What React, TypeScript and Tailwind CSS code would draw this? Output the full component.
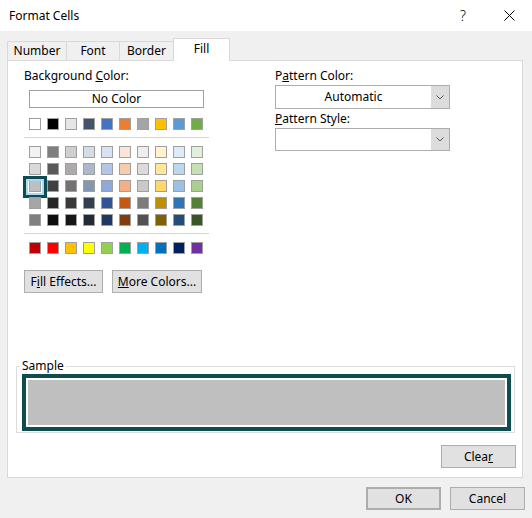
const themeTop = [
  "bg-[#ffffff]", "bg-[#000000]", "bg-[#e7e6e6]", "bg-[#44546a]", "bg-[#4472c4]",
  "bg-[#ed7d31]", "bg-[#a5a5a5]", "bg-[#ffc000]", "bg-[#5b9bd5]", "bg-[#70ad47]",
];

const shades = [
  ["bg-[#f2f2f2]", "bg-[#7f7f7f]", "bg-[#d0cece]", "bg-[#d6dce4]", "bg-[#d9e1f2]", "bg-[#fce4d6]", "bg-[#ededed]", "bg-[#fff2cc]", "bg-[#ddebf7]", "bg-[#e2efda]"],
  ["bg-[#d9d9d9]", "bg-[#595959]", "bg-[#aeaaaa]", "bg-[#acb9ca]", "bg-[#b4c6e7]", "bg-[#f8cbad]", "bg-[#dbdbdb]", "bg-[#ffe699]", "bg-[#bdd7ee]", "bg-[#c6e0b4]"],
  ["bg-[#bfbfbf]", "bg-[#404040]", "bg-[#757171]", "bg-[#8497b0]", "bg-[#8ea9db]", "bg-[#f4b084]", "bg-[#c9c9c9]", "bg-[#ffd966]", "bg-[#9bc2e6]", "bg-[#a9d08e]"],
  ["bg-[#a6a6a6]", "bg-[#262626]", "bg-[#3a3838]", "bg-[#333f4f]", "bg-[#305496]", "bg-[#c65911]", "bg-[#7b7b7b]", "bg-[#bf8f00]", "bg-[#2f75b5]", "bg-[#548235]"],
  ["bg-[#808080]", "bg-[#0d0d0d]", "bg-[#161616]", "bg-[#222b35]", "bg-[#203764]", "bg-[#833c0c]", "bg-[#525252]", "bg-[#806000]", "bg-[#1f4e78]", "bg-[#375623]"],
];

const standard = [
  "bg-[#c00000]", "bg-[#ff0000]", "bg-[#ffc000]", "bg-[#ffff00]", "bg-[#92d050]",
  "bg-[#00b050]", "bg-[#00b0f0]", "bg-[#0070c0]", "bg-[#002060]", "bg-[#7030a0]",
];

function Swatch({ color, selected }: { color: string; selected?: boolean }) {
  return (
    <div className={`relative w-[12px] h-[12px] border border-[#a0a0a0] ${color}`}>
      {selected && (
        <div className="absolute -left-[7px] -top-[5px] w-[24px] h-[22px] border-[3px] border-[#0f4c4f]">
          <div className="w-full h-full border-[2px] border-[#a8d8fa]" />
        </div>
      )}
    </div>
  );
}

function Row({ colors, sel }: { colors: string[]; sel?: number }) {
  return (
    <div className="flex gap-[6px] ml-[5px]">
      {colors.map((c, i) => (
        <Swatch key={i} color={c} selected={i === sel} />
      ))}
    </div>
  );
}

function Chevron() {
  return (
    <svg width="8" height="5" viewBox="0 0 8 5" fill="none">
      <polyline points="0.5,0.5 4,4 7.5,0.5" stroke="#555" strokeWidth="1" />
    </svg>
  );
}

function Dropdown({ value, h }: { value?: string; h: string }) {
  return (
    <div className={`flex w-[175px] ${h} border border-[#adadad] bg-white`}>
      <div className="flex-1 flex items-center justify-center">{value}</div>
      <div className="w-[18px] bg-[#dcdcdc] flex items-center justify-center">
        <Chevron />
      </div>
    </div>
  );
}

function Button({ children, className = "" }: { children: React.ReactNode; className?: string }) {
  return (
    <div className={`h-[23px] flex items-center justify-center bg-[#e1e1e1] border border-[#adadad] ${className}`}>
      {children}
    </div>
  );
}

export default function App() {
  return (
    <div className="w-[532px] h-[518px] bg-[#f0f0f0] flex flex-col overflow-hidden text-[12px] leading-[16px] text-black font-['Noto_Sans',sans-serif]">
      {/* Title bar */}
      <div className="h-[31px] bg-white flex items-center shrink-0">
        <span className="ml-[9px]">Format Cells</span>
        <span className="ml-auto w-[46px] text-center text-[14px] font-light">?</span>
        <div className="w-[46px] flex items-center justify-center">
          <svg width="11" height="11" viewBox="0 0 11 11">
            <path d="M0.5 0.5 L10.5 10.5 M10.5 0.5 L0.5 10.5" stroke="#000" strokeWidth="1" />
          </svg>
        </div>
      </div>

      {/* Tabs */}
      <div className="relative z-10 flex items-end pl-[7px] pt-[7px] -mb-px shrink-0">
        <div className="w-[59px] h-[20px] flex items-center justify-center border-l border-t border-b border-[#d9d9d9]">Number</div>
        <div className="w-[53px] h-[20px] flex items-center justify-center border-l border-t border-b border-[#d9d9d9]">Font</div>
        <div className="w-[54px] h-[20px] flex items-center justify-center border-l border-t border-b border-[#d9d9d9]">Border</div>
        <div className="w-[57px] h-[23px] pb-[2px] flex items-center justify-center bg-white border-l border-t border-r border-[#d9d9d9]">Fill</div>
      </div>

      {/* Panel */}
      <div className="ml-[7px] w-[516px] h-[418px] shrink-0 bg-white border border-[#d9d9d9] flex flex-col">
        <div className="flex pt-[7px]">
          {/* Background color */}
          <div className="w-[267px] pl-[16px] flex flex-col">
            <div className="h-[16px]">
              Background <span className="underline">C</span>olor:
            </div>
            <div className="mt-[6px] ml-[5px] w-[175px] h-[18px] border border-[#a0a0a0] flex items-center justify-center">
              No Color
            </div>
            <div className="mt-[10px]">
              <Row colors={themeTop} />
            </div>
            <div className="mt-[7px] w-[185px] h-px bg-[#d4d4d4]" />
            <div className="mt-[8px] flex flex-col gap-[5px]">
              {shades.map((r, i) => (
                <Row key={i} colors={r} sel={i === 2 ? 0 : undefined} />
              ))}
            </div>
            <div className="mt-[7px] w-[185px] h-px bg-[#d4d4d4]" />
            <div className="mt-[8px]">
              <Row colors={standard} />
            </div>
            <div className="mt-[16px] flex gap-[9px]">
              <Button className="w-[79px]">
                <span>F<span className="underline">i</span>ll Effects...</span>
              </Button>
              <Button className="w-[90px]">
                <span><span className="underline">M</span>ore Colors...</span>
              </Button>
            </div>
          </div>

          {/* Pattern */}
          <div className="flex flex-col">
            <div className="h-[16px]">
              P<span className="underline">a</span>ttern Color:
            </div>
            <div className="mt-[1px]">
              <Dropdown value="Automatic" h="h-[24px]" />
            </div>
            <div className="mt-[2px] h-[16px]">
              <span className="underline">P</span>attern Style:
            </div>
            <div className="mt-[1px]">
              <Dropdown h="h-[23px]" />
            </div>
          </div>
        </div>

        {/* Sample */}
        <fieldset className="mt-[65px] ml-[8px] w-[499px] border border-[#dcdcdc] pb-[1px]">
          <legend className="ml-[3px] px-[2px] leading-[16px]">Sample</legend>
          <div className="ml-[5px] w-[489px] h-[57px] border-[4px] border-[#0f4c4f] p-[2px] bg-white">
            <div className="w-full h-full bg-[#bfbfbf]" />
          </div>
        </fieldset>

        <Button className="mt-[12px] self-end mr-[6px] w-[75px]">
          <span>Clea<span className="underline">r</span></span>
        </Button>
      </div>

      {/* Footer buttons */}
      <div className="mt-[9px] flex justify-end gap-[9px] pr-[7px]">
        <Button className="w-[75px] border-2 border-[#0078d7]">OK</Button>
        <Button className="w-[75px]">Cancel</Button>
      </div>
    </div>
  );
}
